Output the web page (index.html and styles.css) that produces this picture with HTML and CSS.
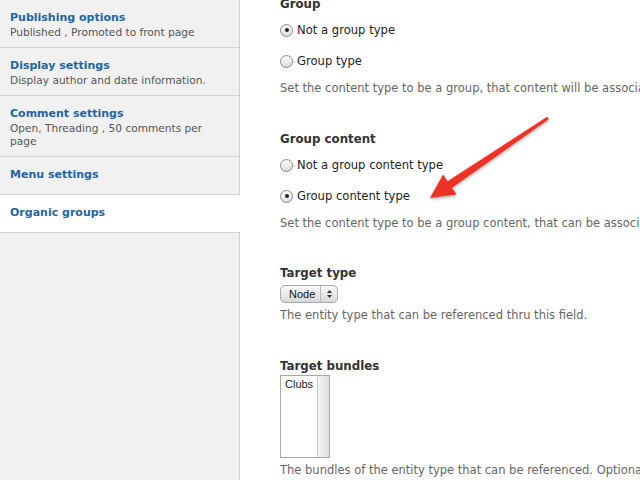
FILE: index.html
```html
<!DOCTYPE html>
<html>
<head>
<meta charset="utf-8">
<link rel="stylesheet" href="styles.css">
</head>
<body>
<div class="page">
  <nav class="tabs">
    <div class="tab">
      <div class="tab-title">Publishing options</div>
      <div class="tab-sum">Published , Promoted to front page</div>
    </div>
    <div class="tab">
      <div class="tab-title">Display settings</div>
      <div class="tab-sum">Display author and date information.</div>
    </div>
    <div class="tab">
      <div class="tab-title">Comment settings</div>
      <div class="tab-sum">Open, Threading , 50 comments per page</div>
    </div>
    <div class="tab tab-only">
      <div class="tab-title">Menu settings</div>
    </div>
    <div class="tab tab-only tab-active">
      <div class="tab-title">Organic groups</div>
    </div>
  </nav>
  <main class="panel">
    <div class="field field-first">
      <div class="label">Group</div>
      <div class="radio-row"><span class="radio checked"></span><span class="radio-label">Not a group type</span></div>
      <div class="radio-row"><span class="radio"></span><span class="radio-label">Group type</span></div>
      <div class="desc">Set the content type to be a group, that content will be associated with</div>
    </div>
    <div class="field">
      <div class="label">Group content</div>
      <div class="radio-row"><span class="radio"></span><span class="radio-label">Not a group content type</span></div>
      <div class="radio-row"><span class="radio checked"></span><span class="radio-label">Group content type</span></div>
      <div class="desc">Set the content type to be a group content, that can be associated with groups</div>
    </div>
    <div class="field field-target">
      <div class="label">Target type</div>
      <div class="select"><span class="select-text">Node</span><span class="select-arrows"><svg width="7" height="10" viewBox="0 0 7 10"><path d="M3.5 1 L6 4 L1 4 Z M3.5 9 L6 6 L1 6 Z" fill="#333"/></svg></span></div>
      <div class="desc desc-tight">The entity type that can be referenced thru this field.</div>
    </div>
    <div class="field">
      <div class="label">Target bundles</div>
      <div class="listbox"><div class="list-items">Clubs</div><div class="list-scroll"></div></div>
      <div class="desc desc-list">The bundles of the entity type that can be referenced. Optional, leave empty for all bundles</div>
    </div>
  </main>
</div>
<svg class="arrow" width="640" height="480" viewBox="0 0 640 480">
  <defs>
    <filter id="sh" x="-20%" y="-20%" width="140%" height="140%">
      <feDropShadow dx="0" dy="1.5" stdDeviation="1.5" flood-color="#000" flood-opacity="0.35"/>
    </filter>
  </defs>
  <polygon filter="url(#sh)" fill="#ee3326" points="430,198 443.1,174.6 447.6,181.2 547.2,116.8 548.8,119.2 452,187.8 456.5,194.4"/>
</svg>
</body>
</html>
```
FILE: styles.css
```css
html, body {
  margin: 0;
  padding: 0;
  height: 100%;
  background: #fff;
  overflow: hidden;
}
body {
  font-family: "DejaVu Sans", Verdana, sans-serif;
  color: #333;
}
.page {
  display: flex;
  height: 480px;
  width: 640px;
  position: relative;
}
.tabs {
  width: 239px;
  flex: none;
  background: #f1f1f1;
  border-right: 1px solid #cfcfcf;
  display: flex;
  flex-direction: column;
}
.tab {
  padding: 10px 10px 8px 10px;
  border-bottom: 1px solid #d2d2d2;
}
.tab-only {
  padding-bottom: 12px;
}
.tab-active {
  background: #fff;
  margin-right: -1px;
  padding-right: 11px;
}
.tab-title {
  font-weight: bold;
  font-size: 11px;
  line-height: 15px;
  color: #1f65a5;
}
.tab-sum {
  font-size: 10.6px;
  line-height: 13px;
  margin-top: 1px;
  color: #555;
  padding-right: 8px;
}
.panel {
  flex: 1;
  padding-left: 40px;
  overflow: hidden;
  white-space: nowrap;
}
.field {
  margin-top: 35px;
}
.field-first {
  margin-top: -4px;
}
.field-target {
  margin-top: 34px;
}
.label {
  font-weight: bold;
  font-size: 11.8px;
  line-height: 16px;
  color: #333;
}
.radio-row {
  display: flex;
  align-items: center;
  height: 18px;
  margin-top: 9px;
}
.radio-row + .radio-row {
  margin-top: 13px;
}
.radio {
  width: 11px;
  height: 11px;
  border-radius: 50%;
  border: 1px solid #8a8a8a;
  background: linear-gradient(#fdfdfd, #dcdcdc);
  box-shadow: inset 0 1px 1px rgba(255,255,255,0.8);
  margin-right: 4px;
  position: relative;
  flex: none;
}
.radio.checked::after {
  content: "";
  position: absolute;
  left: 3.5px;
  top: 3.5px;
  width: 4px;
  height: 4px;
  border-radius: 50%;
  background: #222;
}
.radio-label {
  font-size: 11.6px;
  color: #222;
}
.desc {
  font-size: 11.5px;
  line-height: 15px;
  color: #666;
  margin-top: 11px;
}
.desc-tight {
  margin-top: 5px;
}
.desc-list {
  margin-top: 5px;
}
.select {
  margin-top: 4px;
  width: 56px;
  height: 16px;
  border: 1px solid #a9a9a9;
  border-radius: 5px;
  background: linear-gradient(#fafafa, #d9d9d9);
  display: flex;
  align-items: center;
  box-sizing: content-box;
}
.select-text {
  font-family: "Liberation Sans", Arial, sans-serif;
  font-size: 11px;
  color: #111;
  padding-left: 8px;
  width: 31px;
}
.select-arrows {
  border-left: 1px solid #b8b8b8;
  height: 16px;
  flex: 1;
  display: flex;
  align-items: center;
  justify-content: center;
}
.select-arrows svg {
  display: block;
}
.listbox {
  margin-top: 1px;
  width: 48px;
  height: 81px;
  border: 1px solid #a8a8a8;
  display: flex;
  background: #fff;
}
.list-items {
  flex: 1;
  font-family: "Liberation Sans", Arial, sans-serif;
  font-size: 11px;
  color: #222;
  padding: 2px 0 0 4px;
}
.list-scroll {
  width: 11px;
  border-left: 1px solid #c8c8c8;
  background: linear-gradient(90deg, #f6f6f6, #dedede);
}
.arrow {
  position: absolute;
  left: 0;
  top: 0;
  pointer-events: none;
}
```
